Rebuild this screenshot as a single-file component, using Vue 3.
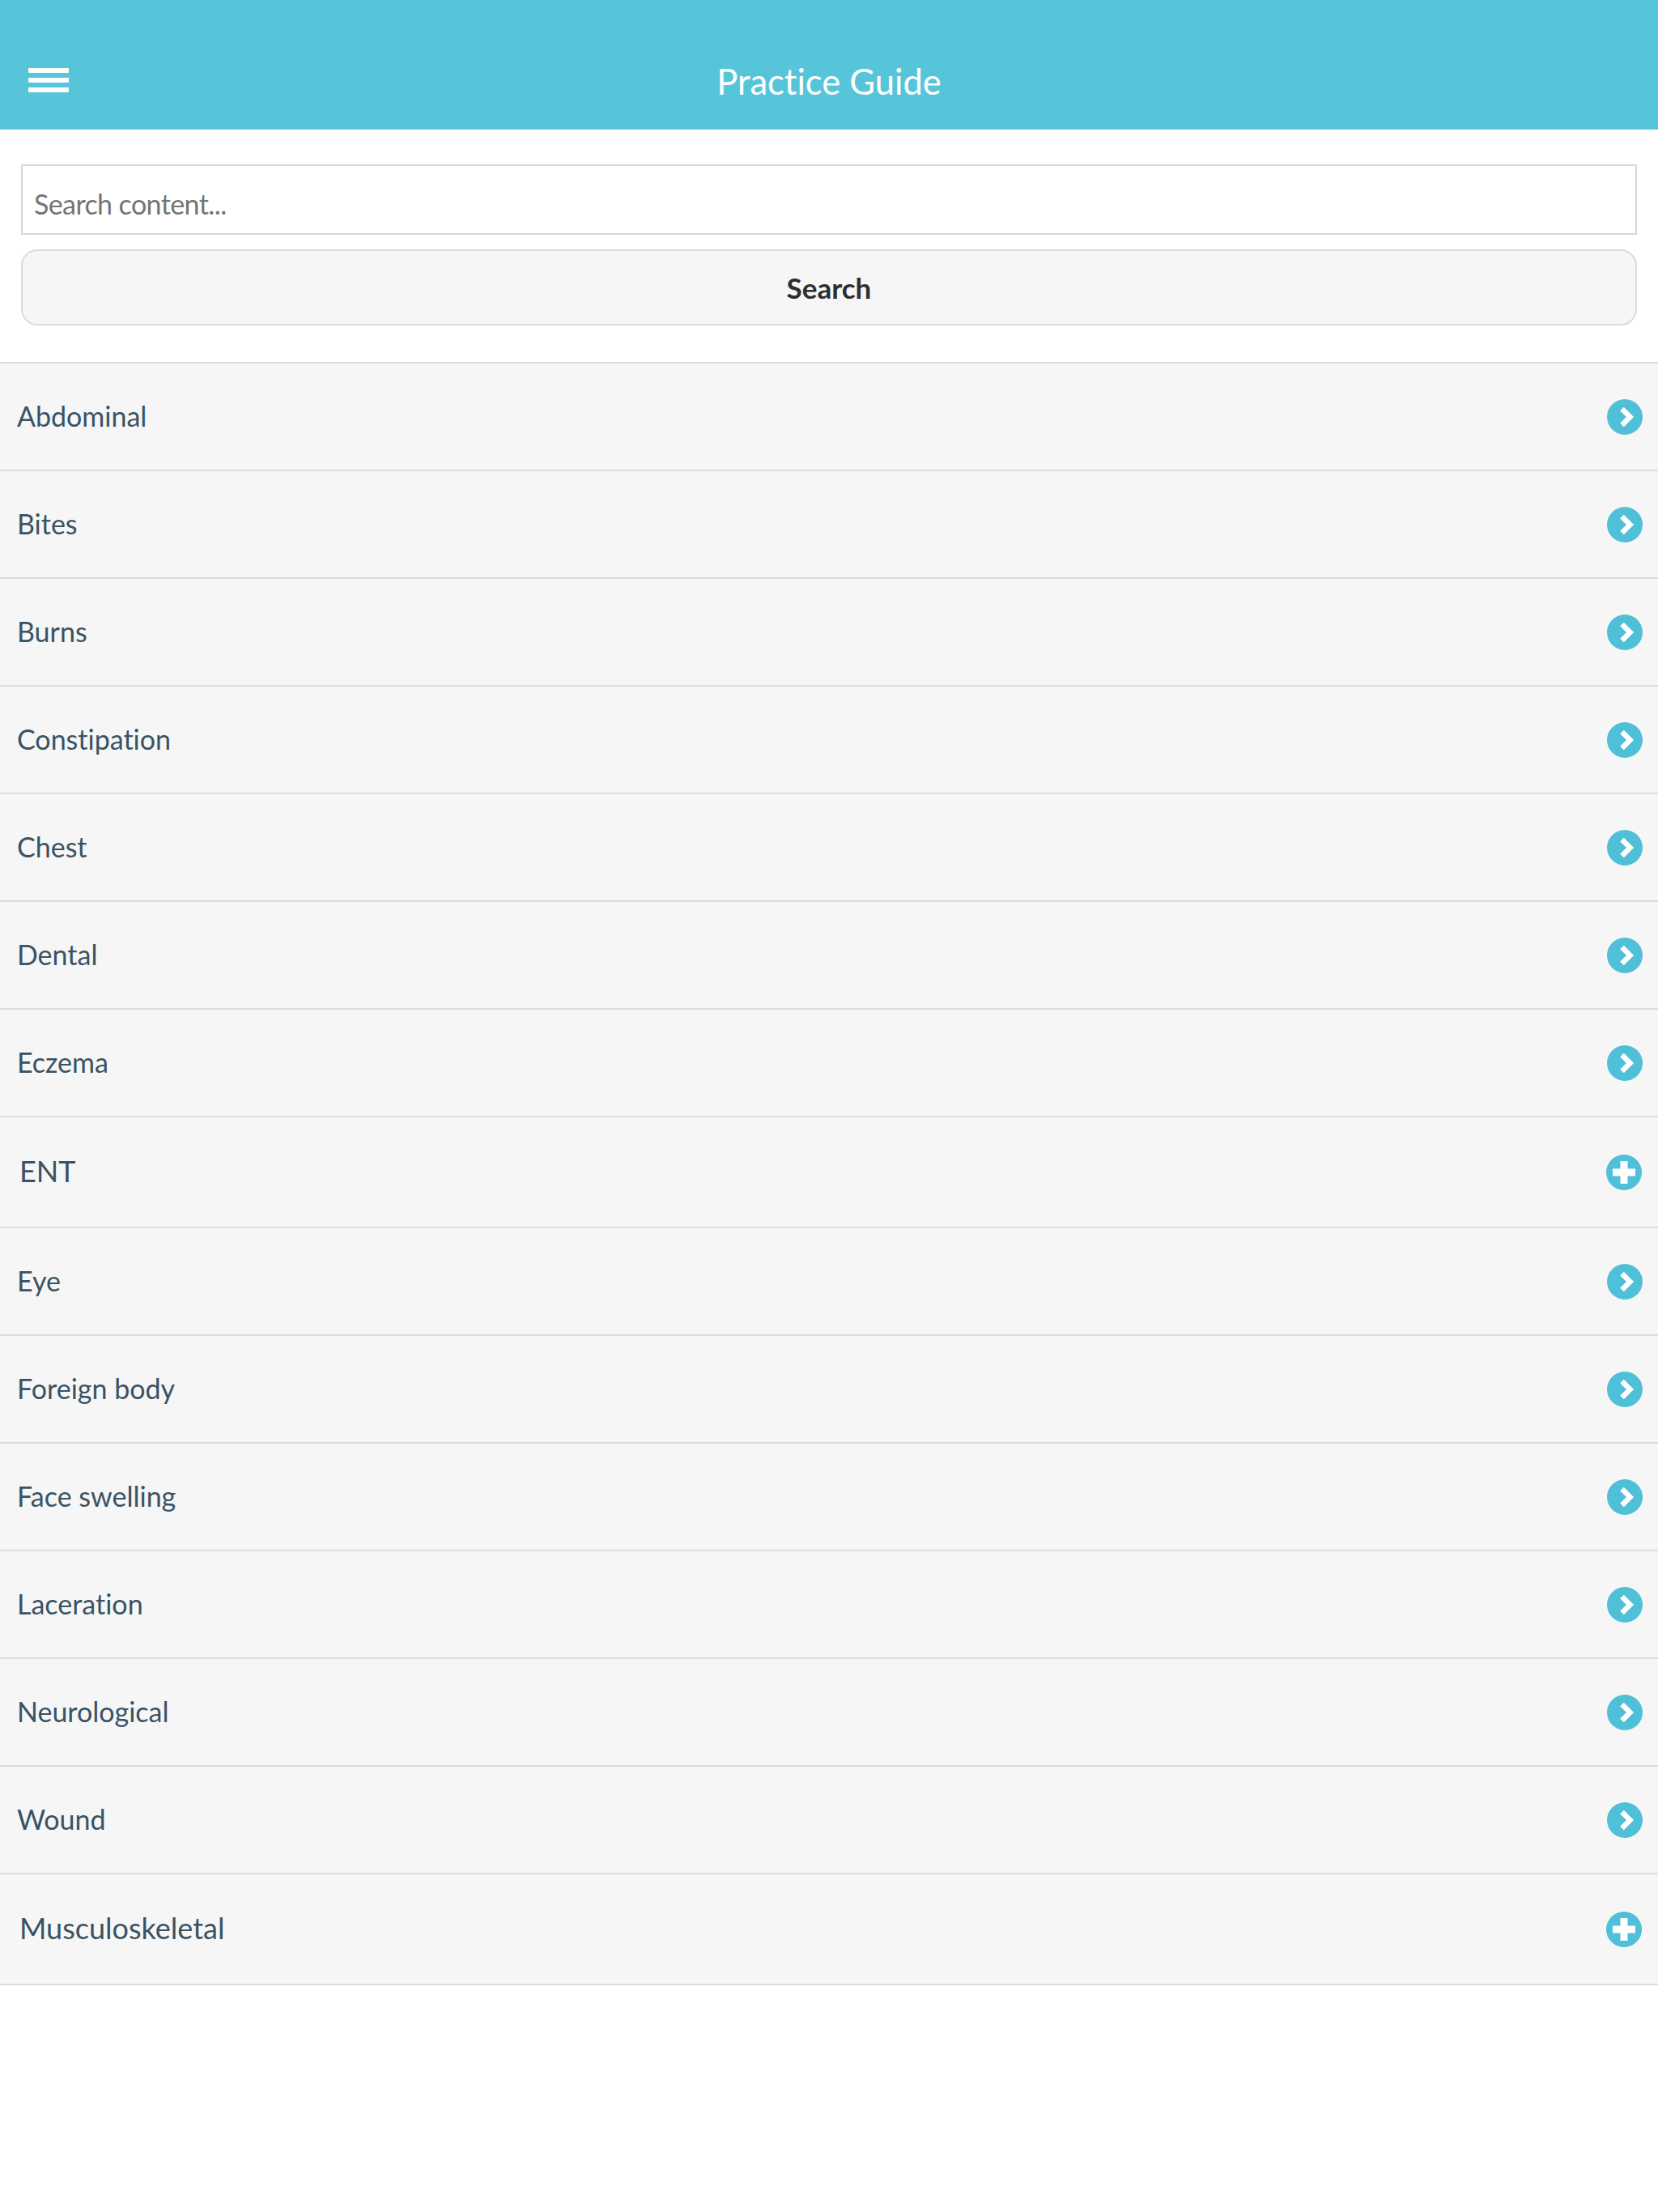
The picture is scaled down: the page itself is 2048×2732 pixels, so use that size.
<script setup>
const topics = [
  { name: "Abdominal" },
  { name: "Bites" },
  { name: "Burns" },
  { name: "Constipation" },
  { name: "Chest" },
  { name: "Dental" },
  { name: "Eczema" },
  { name: "ENT", group: true },
  { name: "Eye" },
  { name: "Foreign body" },
  { name: "Face swelling" },
  { name: "Laceration" },
  { name: "Neurological" },
  { name: "Wound" },
  { name: "Musculoskeletal", group: true },
];
</script>

<template>
  <div class="page">
    <header class="topbar">
      <button class="menu" aria-label="Menu">
        <span></span>
        <span></span>
        <span></span>
      </button>
      <h1>Practice Guide</h1>
    </header>

    <form class="search" @submit.prevent>
      <input type="text" placeholder="Search content..." />
      <button type="submit">Search</button>
    </form>

    <ul class="topics">
      <li v-for="topic in topics" :key="topic.name" :class="{ group: topic.group }">
        <span>{{ topic.name }}</span>
        <svg v-if="topic.group" width="44" height="44" viewBox="0 0 44 44">
          <circle cx="22" cy="22" r="22" fill="#4fc0d8" />
          <path d="M17.5 8h9v9.5H36v9h-9.500v9.500h-9v-9.500H8v-9h9.500z" fill="#fff" />
        </svg>
        <svg v-else width="44" height="44" viewBox="0 0 44 44">
          <circle cx="22" cy="22" r="22" fill="#4fc0d8" />
          <path d="M18.500 12 28.500 22 18.500 32" fill="none" stroke="#fff" stroke-width="6.500" />
        </svg>
      </li>
    </ul>
  </div>
</template>

<style>
html,
body {
  background: #fff;
}
</style>

<style scoped>
.page {
  font-family: Lato, "Open Sans", sans-serif;
  font-variant-ligatures: none;
  min-height: 2732px;
  background: #fff;
}

.topbar {
  height: 160px;
  background: #56c5da;
  display: flex;
  align-items: flex-end;
  justify-content: center;
  position: relative;
  box-sizing: border-box;
  padding-bottom: 35px;
}

.topbar h1 {
  margin: 0;
  color: #fff;
  font-size: 43.500px;
  font-weight: 400;
  line-height: 50px;
}

.menu {
  position: absolute;
  left: 35px;
  top: 84px;
  width: 50px;
  height: 30px;
  padding: 0;
  border: none;
  background: none;
  display: flex;
  flex-direction: column;
  justify-content: space-between;
}

.menu span {
  display: block;
  height: 6px;
  background: #fff;
  border-radius: 1px;
}

.search {
  padding: 43px 26px 45px;
  display: flex;
  flex-direction: column;
  gap: 18px;
}

.search input {
  height: 87px;
  box-sizing: border-box;
  border: 2px solid #d8d8d8;
  background: #fff;
  padding: 10px 14px 0;
  font: 34px Lato, sans-serif;
  font-variant-ligatures: none;
  letter-spacing: -0.6px;
  outline: none;
}

.search input::placeholder {
  color: #757575;
  opacity: 1;
}

.search button {
  height: 94px;
  box-sizing: border-box;
  border: 2px solid #dcdcdc;
  border-radius: 20px;
  background: #f6f6f6;
  color: #2e2e2e;
  padding: 0;
  font: 700 35px Lato, sans-serif;
}

.topics {
  list-style: none;
  margin: 0;
  padding: 0;
  border-bottom: 2px solid #dcdcdc;
}

.topics li {
  height: 133px;
  box-sizing: border-box;
  border-top: 2px solid #dcdcdc;
  background: #f6f6f6;
  padding: 0 19px 0 21px;
  display: flex;
  align-items: center;
  justify-content: space-between;
  color: #3a5364;
  font-size: 34px;
}

.topics li span {
  padding-bottom: 2px;
}

.topics li.group {
  height: 137px;
  padding: 0 20px 0 24px;
  font-size: 36px;
}

.topics li.group span {
  padding-bottom: 4px;
}
</style>
